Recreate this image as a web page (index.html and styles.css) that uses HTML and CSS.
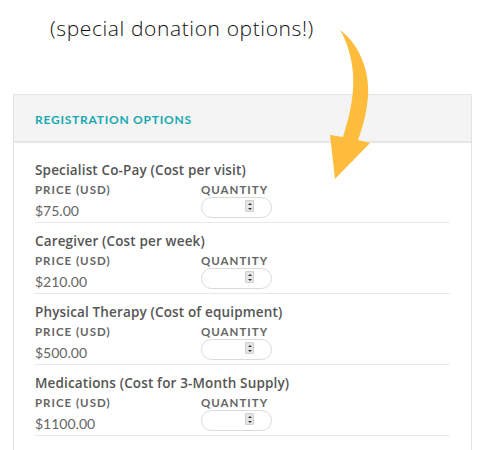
FILE: index.html
```
<!DOCTYPE html>
<html>
<head>
<meta charset="utf-8">
<link rel="stylesheet" href="styles.css">
</head>
<body>
<div class="caption">(special donation options!)</div>
<div class="panel">
  <div class="panel-head">REGISTRATION OPTIONS</div>
  <div class="panel-body">
    <div class="row">
      <div class="title">Specialist Co-Pay (Cost per visit)</div>
      <div class="grid">
        <div class="label">PRICE (USD)</div>
        <div class="label">QUANTITY</div>
        <div class="value">$75.00</div>
        <div class="qty"><span class="spin"><i class="up"></i><i class="down"></i></span></div>
      </div>
    </div>
    <div class="row">
      <div class="title">Caregiver (Cost per week)</div>
      <div class="grid">
        <div class="label">PRICE (USD)</div>
        <div class="label">QUANTITY</div>
        <div class="value">$210.00</div>
        <div class="qty"><span class="spin"><i class="up"></i><i class="down"></i></span></div>
      </div>
    </div>
    <div class="row">
      <div class="title">Physical Therapy (Cost of equipment)</div>
      <div class="grid">
        <div class="label">PRICE (USD)</div>
        <div class="label">QUANTITY</div>
        <div class="value">$500.00</div>
        <div class="qty"><span class="spin"><i class="up"></i><i class="down"></i></span></div>
      </div>
    </div>
    <div class="row">
      <div class="title">Medications (Cost for 3-Month Supply)</div>
      <div class="grid">
        <div class="label">PRICE (USD)</div>
        <div class="label">QUANTITY</div>
        <div class="value">$1100.00</div>
        <div class="qty"><span class="spin"><i class="up"></i><i class="down"></i></span></div>
      </div>
    </div>
  </div>
</div>
<svg class="arrow" width="488" height="450" viewBox="0 0 488 450">
  <path d="M340,30 C362,46 372,78 367,105 C365,120 361,132 358,140 L370,143 L335,179 L330,135 L343,137 C350,115 356,90 352,65 C350,52 346,40 340,30 Z" fill="#FDBC3B"/>
</svg>
</body>
</html>
```
FILE: styles.css
```
html, body {
  margin: 0;
  padding: 0;
  background: #fff;
}
body {
  position: relative;
  width: 488px;
  height: 450px;
  overflow: hidden;
  font-family: Lato, "Open Sans", sans-serif;
}
.caption {
  padding: 14px 0 0 50px;
  height: 32px;
  font-family: "Open Sans", Lato, sans-serif;
  font-weight: 300;
  font-size: 21px;
  line-height: 28px;
  letter-spacing: 0.6px;
  color: #111;
}
.panel {
  margin: 48px 0 0 13px;
  width: 457px;
  border: 1px solid #e3e3e3;
  border-bottom: none;
  height: 400px;
  overflow: hidden;
}
.panel-head {
  background: #f4f4f4;
  border-bottom: 2px solid #e6e6e6;
  box-sizing: border-box;
  height: 48px;
  padding-left: 21px;
  line-height: 49px;
  font-size: 12px;
  font-weight: 700;
  letter-spacing: 0.75px;
  color: #17a9b1;
}
.panel-body {
  padding: 9px 21px 0 21px;
}
.row {
  padding-top: 8px;
  border-bottom: 1px solid #e8e8e8;
}
.title {
  height: 20px;
  line-height: 20px;
  font-family: "Open Sans", Lato, sans-serif;
  font-size: 13.5px;
  font-weight: 600;
  letter-spacing: 0.15px;
  color: #555;
}
.grid {
  display: grid;
  grid-template-columns: 166px 1fr;
  grid-template-rows: 20px 22px;
}
.label {
  line-height: 20px;
  font-size: 11.5px;
  font-weight: 700;
  letter-spacing: 1px;
  color: #666;
}
.value {
  line-height: 22px;
  font-size: 14px;
  color: #666;
}
.qty {
  margin-top: -3px;
  width: 69px;
  height: 19px;
  border: 1px solid #dadada;
  border-radius: 11px;
  position: relative;
}
.spin {
  position: absolute;
  left: 43px;
  top: 2px;
  width: 7px;
  height: 10px;
  background: #e6e6e6;
  border: 1px solid #cfcfcf;
  border-radius: 1px;
  display: flex;
  flex-direction: column;
  align-items: center;
  justify-content: space-around;
}
.spin i {
  display: block;
  width: 0;
  height: 0;
  border-left: 2px solid transparent;
  border-right: 2px solid transparent;
}
.spin .up {
  border-bottom: 2px solid #333;
}
.spin .down {
  border-top: 2px solid #333;
}
.arrow {
  position: absolute;
  left: 0;
  top: 0;
  pointer-events: none;
}
```
